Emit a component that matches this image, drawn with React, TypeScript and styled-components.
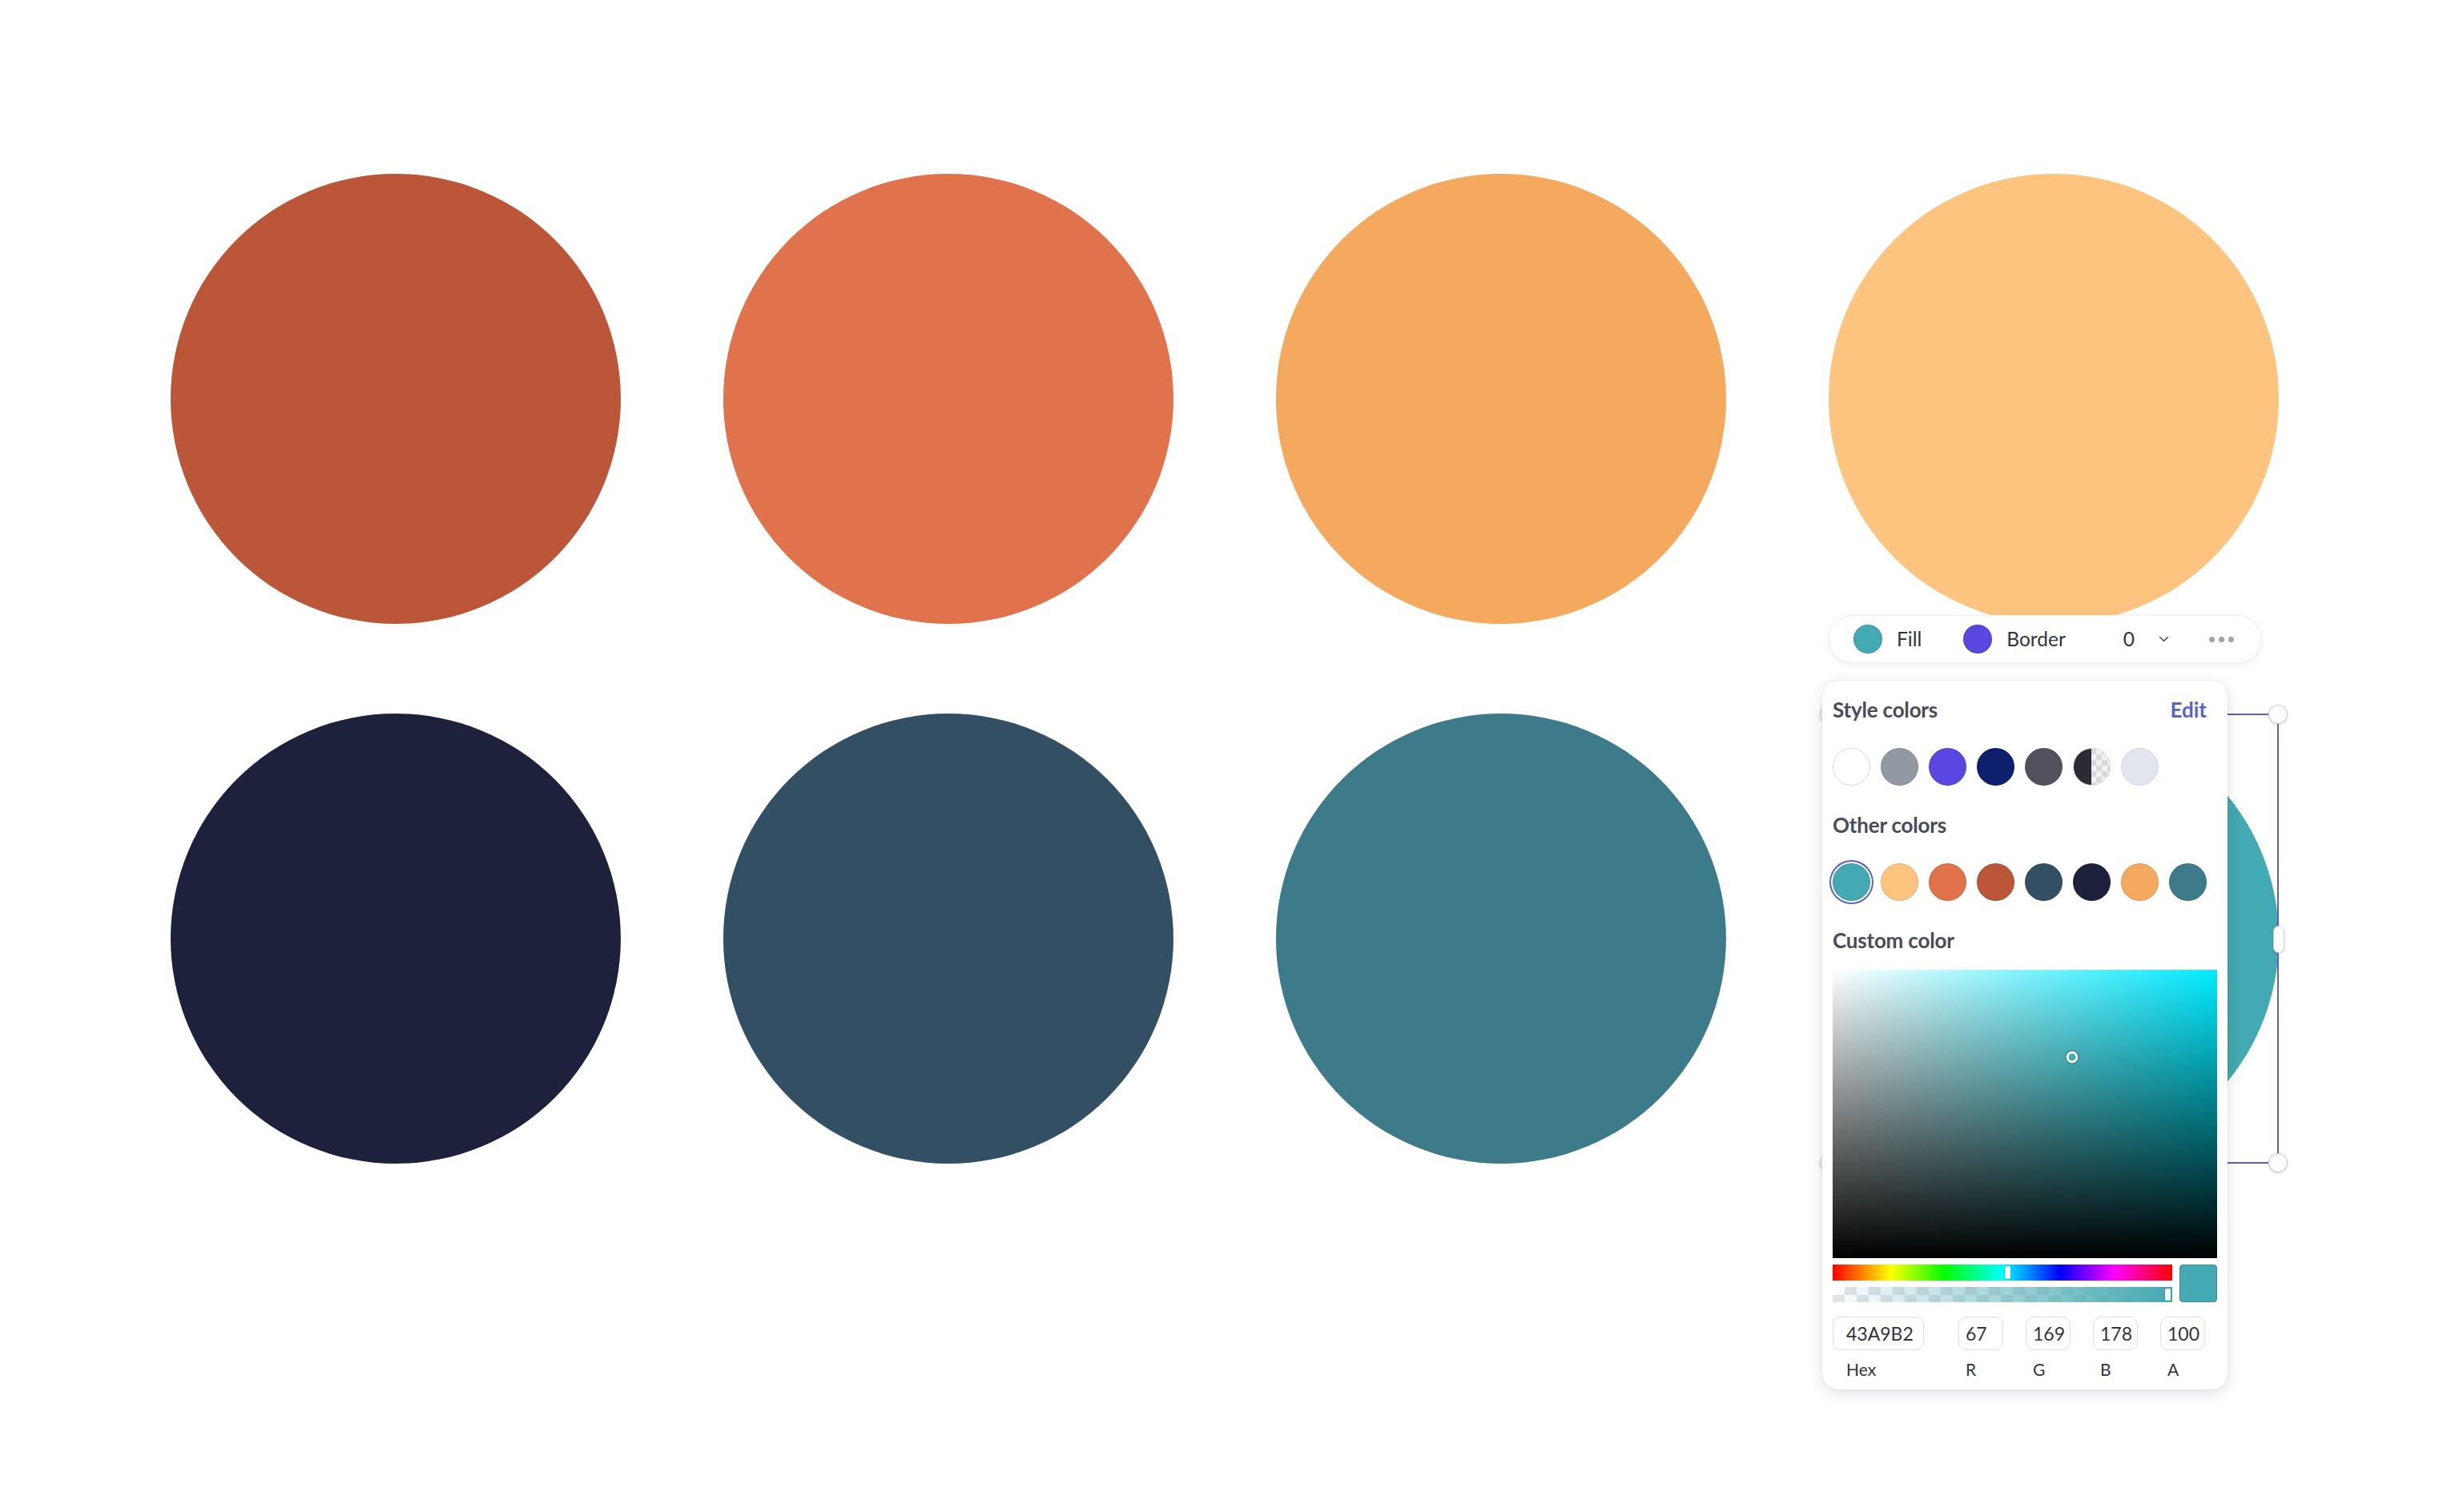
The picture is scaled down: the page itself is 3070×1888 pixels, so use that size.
import * as React from "react";
import styled, { createGlobalStyle } from "styled-components";

const GlobalStyle = createGlobalStyle`
  html, body {
    margin: 0;
    padding: 0;
    background: #ffffff;
  }
  body {
    font-family: Lato, "Open Sans", sans-serif;
    color: #333340;
  }
`;

const CIRCLES = [
  "#BC5638",
  "#E0734B",
  "#F4A95E",
  "#FDC47F",
  "#1E213B",
  "#334F64",
  "#3D7A8A",
];

const SELECTED = "#43A9B2";

const STYLE_COLORS = ["#FFFFFF", "#9299A3", "#5A46E0", "#0E1F6E", "#51525E", "half", "#E3E5EE"];
const OTHER_COLORS = ["#43A9B2", "#FDC47F", "#E0734B", "#BC5638", "#334F64", "#1E213B", "#F4A95E", "#3D7A8A"];

function hexToHsv(hex: string) {
  const r = parseInt(hex.slice(1, 3), 16);
  const g = parseInt(hex.slice(3, 5), 16);
  const b = parseInt(hex.slice(5, 7), 16);
  const max = Math.max(r, g, b);
  const min = Math.min(r, g, b);
  const d = max - min;
  let h = 0;
  if (d !== 0) {
    if (max === r) h = ((g - b) / d) % 6;
    else if (max === g) h = (b - r) / d + 2;
    else h = (r - g) / d + 4;
  }
  h = (h * 60 + 360) % 360;
  return { h, s: max === 0 ? 0 : d / max, v: max / 255, r, g, b };
}

const SPECTRUM_W = 480;
const SPECTRUM_H = 360;
const SLIDER_W = 424;

export default function App() {
  const hsv = hexToHsv(SELECTED);

  return (
    <>
      <GlobalStyle />
      <Canvas>
        <CircleGrid>
          {CIRCLES.map((c) => (
            <Shape key={c} $color={c} />
          ))}
          <SelectedCell>
            <Shape $color={SELECTED} />
            <SelectionFrame>
              <CornerHandle $left $top />
              <CornerHandle $top />
              <CornerHandle $left />
              <CornerHandle />
              <SideHandle />
            </SelectionFrame>
          </SelectedCell>
        </CircleGrid>

        <FloatingMenu>
          <Toolbar>
            <ToolGroup>
              <ToolDot $color={SELECTED} />
              <ToolLabel>Fill</ToolLabel>
            </ToolGroup>
            <ToolGroup $ml={52}>
              <ToolDot $color="#5A46E0" />
              <ToolLabel>Border</ToolLabel>
            </ToolGroup>
            <ToolGroup $ml={72} $gap={30}>
              <ToolLabel>0</ToolLabel>
              <svg width="13" height="8" viewBox="0 0 13 8">
                <path d="M1.5 1.5 L6.5 6.3 L11.5 1.5" fill="none" stroke="#555560" strokeWidth="1.6" strokeLinecap="round" strokeLinejoin="round" />
              </svg>
            </ToolGroup>
            <MoreDots $ml={50}>
              <span />
              <span />
              <span />
            </MoreDots>
          </Toolbar>

          <Popover>
            <SectionHeader>
              <SectionTitle>Style colors</SectionTitle>
              <EditLink>Edit</EditLink>
            </SectionHeader>
            <SwatchRow>
              {STYLE_COLORS.map((c, i) =>
                c === "half" ? (
                  <HalfSwatch key={i} />
                ) : (
                  <Swatch key={i} $color={c} $light={c === "#FFFFFF" || c === "#E3E5EE"} />
                )
              )}
            </SwatchRow>

            <SectionHeader>
              <SectionTitle>Other colors</SectionTitle>
            </SectionHeader>
            <SwatchRow>
              {OTHER_COLORS.map((c, i) => (
                <Swatch key={i} $color={c} $selected={i === 0} />
              ))}
            </SwatchRow>

            <SectionHeader $mb={21}>
              <SectionTitle>Custom color</SectionTitle>
            </SectionHeader>
            <Spectrum $hue={hsv.h}>
              <SpectrumCursor
                style={{ left: hsv.s * SPECTRUM_W, top: (1 - hsv.v) * SPECTRUM_H }}
              />
            </Spectrum>

            <SliderRow>
              <Sliders>
                <HueSlider>
                  <SliderThumb style={{ left: (hsv.h / 360) * SLIDER_W }} />
                </HueSlider>
                <AlphaSlider $color={SELECTED}>
                  <SliderThumb style={{ left: SLIDER_W - 6 }} />
                </AlphaSlider>
              </Sliders>
              <Preview $color={SELECTED} />
            </SliderRow>

            <FieldRow>
              <Field $wide>
                <FieldInput $wide readOnly value={SELECTED.slice(1).toUpperCase()} />
                <FieldLabel $wide>Hex</FieldLabel>
              </Field>
              <Field>
                <FieldInput readOnly value={String(hsv.r)} />
                <FieldLabel>R</FieldLabel>
              </Field>
              <Field>
                <FieldInput readOnly value={String(hsv.g)} />
                <FieldLabel>G</FieldLabel>
              </Field>
              <Field>
                <FieldInput readOnly value={String(hsv.b)} />
                <FieldLabel>B</FieldLabel>
              </Field>
              <Field>
                <FieldInput readOnly value="100" />
                <FieldLabel>A</FieldLabel>
              </Field>
            </FieldRow>
          </Popover>
        </FloatingMenu>
      </Canvas>
    </>
  );
}

const Canvas = styled.div`
  position: relative;
  width: 3070px;
  height: 1888px;
  overflow: hidden;
  background: #ffffff;
`;

const CircleGrid = styled.div`
  display: grid;
  grid-template-columns: repeat(4, 562px);
  grid-auto-rows: 562px;
  column-gap: 128px;
  row-gap: 112px;
  padding: 217px 0 0 213px;
`;

const Shape = styled.div<{ $color: string }>`
  width: 562px;
  height: 562px;
  border-radius: 50%;
  background: ${(p) => p.$color};
`;

const SelectedCell = styled.div`
  position: relative;
  width: 562px;
  height: 562px;
`;

const SelectionFrame = styled.div`
  position: absolute;
  inset: 0;
  border: 2px solid #5c61b9;
`;

const CornerHandle = styled.div<{ $left?: boolean; $top?: boolean }>`
  position: absolute;
  box-sizing: border-box;
  width: 24px;
  height: 24px;
  border-radius: 50%;
  background: #ffffff;
  border: 1.5px solid #c4c7d8;
  box-shadow: 0 1px 3px rgba(40, 40, 80, 0.18);
  ${(p) => (p.$left ? "left: -13px;" : "right: -13px;")}
  ${(p) => (p.$top ? "top: -13px;" : "bottom: -13px;")}
`;

const SideHandle = styled.div`
  position: absolute;
  right: -9px;
  top: 50%;
  width: 12px;
  height: 32px;
  margin-top: -16px;
  border-radius: 7px;
  background: #ffffff;
  border: 1.5px solid #d0d2de;
  box-shadow: 0 1px 3px rgba(40, 40, 80, 0.18);
`;

const FloatingMenu = styled.div`
  position: absolute;
  left: 2275px;
  top: 768px;
  display: flex;
  flex-direction: column;
  align-items: flex-start;
  gap: 22px;
`;

const Toolbar = styled.div`
  display: flex;
  align-items: center;
  box-sizing: border-box;
  margin-left: 8px;
  width: 540px;
  height: 60px;
  padding: 0 30px;
  border-radius: 30px;
  background: #ffffff;
  border: 1px solid #f0f0f3;
  box-shadow: 0 2px 8px rgba(30, 30, 60, 0.08);
`;

const ToolGroup = styled.div<{ $ml?: number; $gap?: number }>`
  display: flex;
  align-items: center;
  gap: ${(p) => p.$gap ?? 18}px;
  margin-left: ${(p) => p.$ml ?? 0}px;
`;

const ToolDot = styled.span<{ $color: string }>`
  display: block;
  width: 36px;
  height: 36px;
  border-radius: 50%;
  box-sizing: border-box;
  background: ${(p) => p.$color};
  border: 1px solid rgba(0, 0, 0, 0.12);
`;

const ToolLabel = styled.span`
  font-size: 24.5px;
  line-height: 30px;
  color: #33333d;
`;

const MoreDots = styled.div<{ $ml: number }>`
  display: flex;
  gap: 5px;
  margin-left: ${(p) => p.$ml}px;

  span {
    display: block;
    width: 7px;
    height: 7px;
    border-radius: 50%;
    background: #a2a3ad;
  }
`;

const Popover = styled.div`
  box-sizing: border-box;
  width: 506px;
  height: 885px;
  padding: 20px 13px 14px;
  border-radius: 20px;
  background: #ffffff;
  box-shadow: 0 4px 18px rgba(30, 30, 60, 0.14), 0 0 0 1px rgba(30, 30, 60, 0.04);
`;

const SectionHeader = styled.div<{ $mb?: number }>`
  display: flex;
  justify-content: space-between;
  align-items: baseline;
  margin-bottom: ${(p) => p.$mb ?? 32}px;
`;

const SectionTitle = styled.span`
  font-size: 26px;
  line-height: 32px;
  font-weight: 700;
  color: #4a4b57;
  letter-spacing: -0.2px;
`;

const EditLink = styled.span`
  font-size: 26px;
  line-height: 32px;
  font-weight: 700;
  color: #5a63c8;
  padding-right: 13px;
`;

const SwatchRow = styled.div`
  display: flex;
  gap: 13px;
  height: 47px;
  margin-bottom: 33px;
`;

const Swatch = styled.span<{ $color: string; $light?: boolean; $selected?: boolean }>`
  display: block;
  flex: none;
  box-sizing: border-box;
  width: 47px;
  height: 47px;
  border-radius: 50%;
  background: ${(p) => p.$color};
  border: 1px solid ${(p) => (p.$light ? "#d6d8e0" : "rgba(0, 0, 0, 0.1)")};
  ${(p) => p.$selected && "box-shadow: 0 0 0 2px #ffffff, 0 0 0 4px #5a63c8;"}
`;

const HalfSwatch = styled.span`
  display: block;
  flex: none;
  box-sizing: border-box;
  width: 47px;
  height: 47px;
  border-radius: 50%;
  border: 1px solid #d6d8e0;
  background:
    linear-gradient(to right, #2a2b35 50%, transparent 50%),
    repeating-conic-gradient(#d9d9dc 0% 25%, #f2f2f4 0% 50%) 0 0 / 14px 14px;
`;

const Spectrum = styled.div<{ $hue: number }>`
  position: relative;
  width: ${SPECTRUM_W}px;
  height: ${SPECTRUM_H}px;
  background:
    linear-gradient(to top, #000000, rgba(0, 0, 0, 0)),
    linear-gradient(to right, #ffffff, hsl(${(p) => p.$hue}, 100%, 50%));
`;

const SpectrumCursor = styled.span`
  position: absolute;
  width: 9px;
  height: 9px;
  border-radius: 50%;
  border: 3px solid #ffffff;
  box-shadow: 0 0 0 1px rgba(0, 0, 0, 0.45);
  transform: translate(-50%, -50%);
`;

const SliderRow = styled.div`
  display: flex;
  gap: 9px;
  margin-top: 8px;
`;

const Sliders = styled.div`
  display: flex;
  flex-direction: column;
  gap: 8px;
`;

const HueSlider = styled.div`
  position: relative;
  width: ${SLIDER_W}px;
  height: 20px;
  background: linear-gradient(
    to right,
    #ff0000 0%,
    #ffff00 17%,
    #00ff00 33%,
    #00ffff 50%,
    #0000ff 67%,
    #ff00ff 83%,
    #ff0000 100%
  );
`;

const AlphaSlider = styled.div<{ $color: string }>`
  position: relative;
  width: ${SLIDER_W}px;
  height: 19px;
  background:
    linear-gradient(to right, rgba(67, 169, 178, 0), ${(p) => p.$color}),
    repeating-conic-gradient(#e4e4e6 0% 25%, #ffffff 0% 50%) 0 0 / 30px 20px;
`;

const SliderThumb = styled.span`
  position: absolute;
  top: 2px;
  bottom: 2px;
  width: 7px;
  margin-left: -3px;
  border-radius: 2px;
  background: #ffffff;
  box-shadow: 0 0 2px rgba(0, 0, 0, 0.3);
`;

const Preview = styled.div<{ $color: string }>`
  box-sizing: border-box;
  width: 47px;
  height: 47px;
  border-radius: 4px;
  background: ${(p) => p.$color};
  border: 1px solid #3a8b93;
`;

const FieldRow = styled.div`
  display: flex;
  gap: 28px;
  margin-top: 18px;
`;

const Field = styled.div<{ $wide?: boolean }>`
  display: flex;
  flex-direction: column;
  gap: 11px;
  margin-right: ${(p) => (p.$wide ? 15 : 0)}px;
`;

const FieldInput = styled.input<{ $wide?: boolean }>`
  box-sizing: border-box;
  width: ${(p) => (p.$wide ? 114 : 56)}px;
  height: 42px;
  padding: 0 0 0 ${(p) => (p.$wide ? 16 : 8)}px;
  border: 1.5px solid #dedee3;
  border-radius: 10px;
  font-family: Lato, sans-serif;
  font-size: 23px;
  color: #33333d;
  background: #ffffff;
  outline: none;
`;

const FieldLabel = styled.span<{ $wide?: boolean }>`
  padding-left: ${(p) => (p.$wide ? 17 : 9)}px;
  font-size: 21px;
  line-height: 25px;
  color: #33333d;
`;
